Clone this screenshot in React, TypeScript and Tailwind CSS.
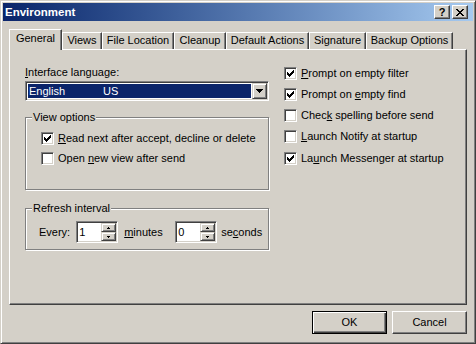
import React from "react"

// win2000 style 3d edges
const raised =
    "border border-t-white border-l-white border-r-[#404040] border-b-[#404040] shadow-[inset_-1px_-1px_0_#808080]"
const sunken =
    "border border-t-[#808080] border-l-[#808080] border-r-white border-b-white shadow-[inset_1px_1px_0_#404040,inset_-1px_-1px_0_#d4d0c8]"

function Tri({ widths }: { widths: number[] }) {
    const w = Math.max(...widths)
    return (
        <svg width={w} height={widths.length} shapeRendering="crispEdges" className="block">
            {widths.map((n, i) => (
                <rect key={i} x={(w - n) / 2} y={i} width={n} height={1} fill="#000" />
            ))}
        </svg>
    )
}

function Box({ on }: { on?: boolean }) {
    return (
        <span className={"flex h-[13px] w-[13px] shrink-0 items-center justify-center bg-white " + sunken}>
            {on && (
                <svg width="7" height="7" shapeRendering="crispEdges" className="block">
                    {[2, 3, 4, 3, 2, 1, 0].map((y, x) => (
                        <rect key={x} x={x} y={y} width={1} height={3} fill="#000" />
                    ))}
                </svg>
            )}
        </span>
    )
}

function CheckRow({ on, children }: { on?: boolean; children: React.ReactNode }) {
    return (
        <div className="flex h-[13px] items-center gap-[4px]">
            <Box on={on} />
            <span className="whitespace-nowrap">{children}</span>
        </div>
    )
}

function Group({ label, className, children }: { label: string; className: string; children: React.ReactNode }) {
    return (
        <div className={"relative border border-[#808080] shadow-[inset_1px_1px_0_#fff,1px_1px_0_#fff] " + className}>
            <span className="absolute -top-[7px] left-[6px] bg-[#d4d0c8] px-[1px] leading-[13px]">{label}</span>
            {children}
        </div>
    )
}

function SpinBtn({ up }: { up?: boolean }) {
    return (
        <div className="flex h-[9px] items-center justify-center border border-t-[#d4d0c8] border-l-[#d4d0c8] border-r-[#404040] border-b-[#404040] bg-[#d4d0c8] shadow-[inset_1px_1px_0_#fff,inset_-1px_-1px_0_#808080]">
            <Tri widths={up ? [1, 3] : [3, 1]} />
        </div>
    )
}

function Spin({ value }: { value: string }) {
    return (
        <div className={"flex h-[22px] w-[42px] bg-white p-[1px] " + sunken}>
            <span className="flex-1 pl-[1px] leading-[18px]">{value}</span>
            <div className="flex w-[15px] flex-col">
                <SpinBtn up />
                <SpinBtn />
            </div>
        </div>
    )
}

function Tab({ label, w }: { label: string; w: string }) {
    return (
        <div className={"mt-[3px] flex h-[17px] items-start justify-center pt-[1px] " + w + " border-t border-l border-r border-t-white border-l-white border-r-[#404040] shadow-[inset_-1px_0_0_#808080]"}>
            {label}
        </div>
    )
}

export default function App() {
    return (
        <div className={"flex h-[344px] w-[476px] flex-col bg-[#d4d0c8] p-[2px] font-['Liberation_Sans',Arial,sans-serif] text-[11px] leading-[13px] text-black border border-t-[#d4d0c8] border-l-[#d4d0c8] border-r-[#404040] border-b-[#404040] shadow-[inset_1px_1px_0_#fff,inset_-1px_-1px_0_#808080]"}>
            {/* title bar */}
            <div className="flex h-[18px] items-center bg-linear-to-r from-[#0a246a] to-[#a6caf0] pl-[2px] pr-[5px]">
                <span className="text-[11.5px] font-bold text-white">Environment</span>
                <div className="ml-auto flex gap-[2px]">
                    <div className={"flex h-[14px] w-[16px] items-center justify-center bg-[#d4d0c8] text-[11px] leading-none font-bold " + raised}>
                        ?
                    </div>
                    <div className={"flex h-[14px] w-[16px] items-center justify-center bg-[#d4d0c8] " + raised}>
                        <svg width="8" height="7" shapeRendering="crispEdges" className="block">
                            {[[0, 6], [1, 5], [2, 4], [3, 3], [2, 4], [1, 5], [0, 6]].map(([a, b], y) => (
                                <g key={y}>
                                    <rect x={a} y={y} width={2} height={1} fill="#000" />
                                    <rect x={b} y={y} width={2} height={1} fill="#000" />
                                </g>
                            ))}
                        </svg>
                    </div>
                </div>
            </div>

            {/* tabs */}
            <div className="mt-[8px] ml-[6px] flex h-[20px] items-start">
                <div className="relative z-10 flex h-[21px] w-[53px] justify-center bg-[#d4d0c8] pt-[2px] border-t border-l border-r border-t-white border-l-white border-r-[#404040] shadow-[inset_-1px_0_0_#808080]">
                    General
                </div>
                <Tab label="Views" w="w-[40px]" />
                <Tab label="File Location" w="w-[72px]" />
                <Tab label="Cleanup" w="w-[52px]" />
                <Tab label="Default Actions" w="w-[83px]" />
                <Tab label="Signature" w="w-[57px]" />
                <Tab label="Backup Options" w="w-[87px]" />
            </div>

            {/* page */}
            <div className={"ml-[6px] flex h-[256px] w-[458px] pl-[15px] pt-[16px] " + raised}>
                <div className="flex w-[244px] flex-col">
                    <span>
                        <u>I</u>nterface language:
                    </span>
                    <div className={"mt-[2px] flex h-[20px] bg-white p-[1px] " + sunken}>
                        <div className="my-[1px] ml-[1px] flex flex-1 items-center bg-[#0a246a] pl-[1px] text-white">
                            <span className="w-[74px]">English</span>
                            <span>US</span>
                        </div>
                        <div className="ml-[1px] flex w-[15px] items-center justify-center border border-t-[#d4d0c8] border-l-[#d4d0c8] border-r-[#404040] border-b-[#404040] bg-[#d4d0c8] shadow-[inset_1px_1px_0_#fff,inset_-1px_-1px_0_#808080]">
                            <Tri widths={[7, 5, 3, 1]} />
                        </div>
                    </div>

                    <Group label="View options" className="mt-[16px] flex h-[73px] flex-col gap-[7px] pl-[15px] pt-[14px]">
                        <CheckRow on>
                            <u>R</u>ead next after accept, decline or delete
                        </CheckRow>
                        <CheckRow>
                            Open <u>n</u>ew view after send
                        </CheckRow>
                    </Group>

                    <Group label="Refresh interval" className="mt-[18px] h-[42px] pl-[13px] pt-[12px]">
                        <div className="flex items-center">
                            <span>Every:</span>
                            <div className="ml-[6px]">
                                <Spin value="1" />
                            </div>
                            <span className="w-[57px] pl-[6px]">
                                <u>m</u>inutes
                            </span>
                            <Spin value="0" />
                            <span className="ml-[4px]">
                                se<u>c</u>onds
                            </span>
                        </div>
                    </Group>
                </div>

                <div className="mt-[1px] ml-[15px] flex flex-col gap-[8px]">
                    <CheckRow on>
                        <u>P</u>rompt on empty filter
                    </CheckRow>
                    <CheckRow on>
                        Prompt on <u>e</u>mpty find
                    </CheckRow>
                    <CheckRow>
                        Chec<u>k</u> spelling before send
                    </CheckRow>
                    <CheckRow>
                        <u>L</u>aunch Notify at startup
                    </CheckRow>
                    <div className="mt-[1px]">
                        <CheckRow on>
                            La<u>u</u>nch Messenger at startup
                        </CheckRow>
                    </div>
                </div>
            </div>

            {/* buttons */}
            <div className="mt-[6px] ml-[6px] flex w-[458px] justify-end gap-[5px]">
                <div className="flex h-[23px] w-[75px] items-center justify-center border border-black shadow-[inset_1px_1px_0_#fff,inset_-1px_-1px_0_#404040,inset_-2px_-2px_0_#808080]">
                    OK
                </div>
                <div className={"flex h-[23px] w-[75px] items-center justify-center " + raised}>
                    Cancel
                </div>
            </div>
        </div>
    )
}
